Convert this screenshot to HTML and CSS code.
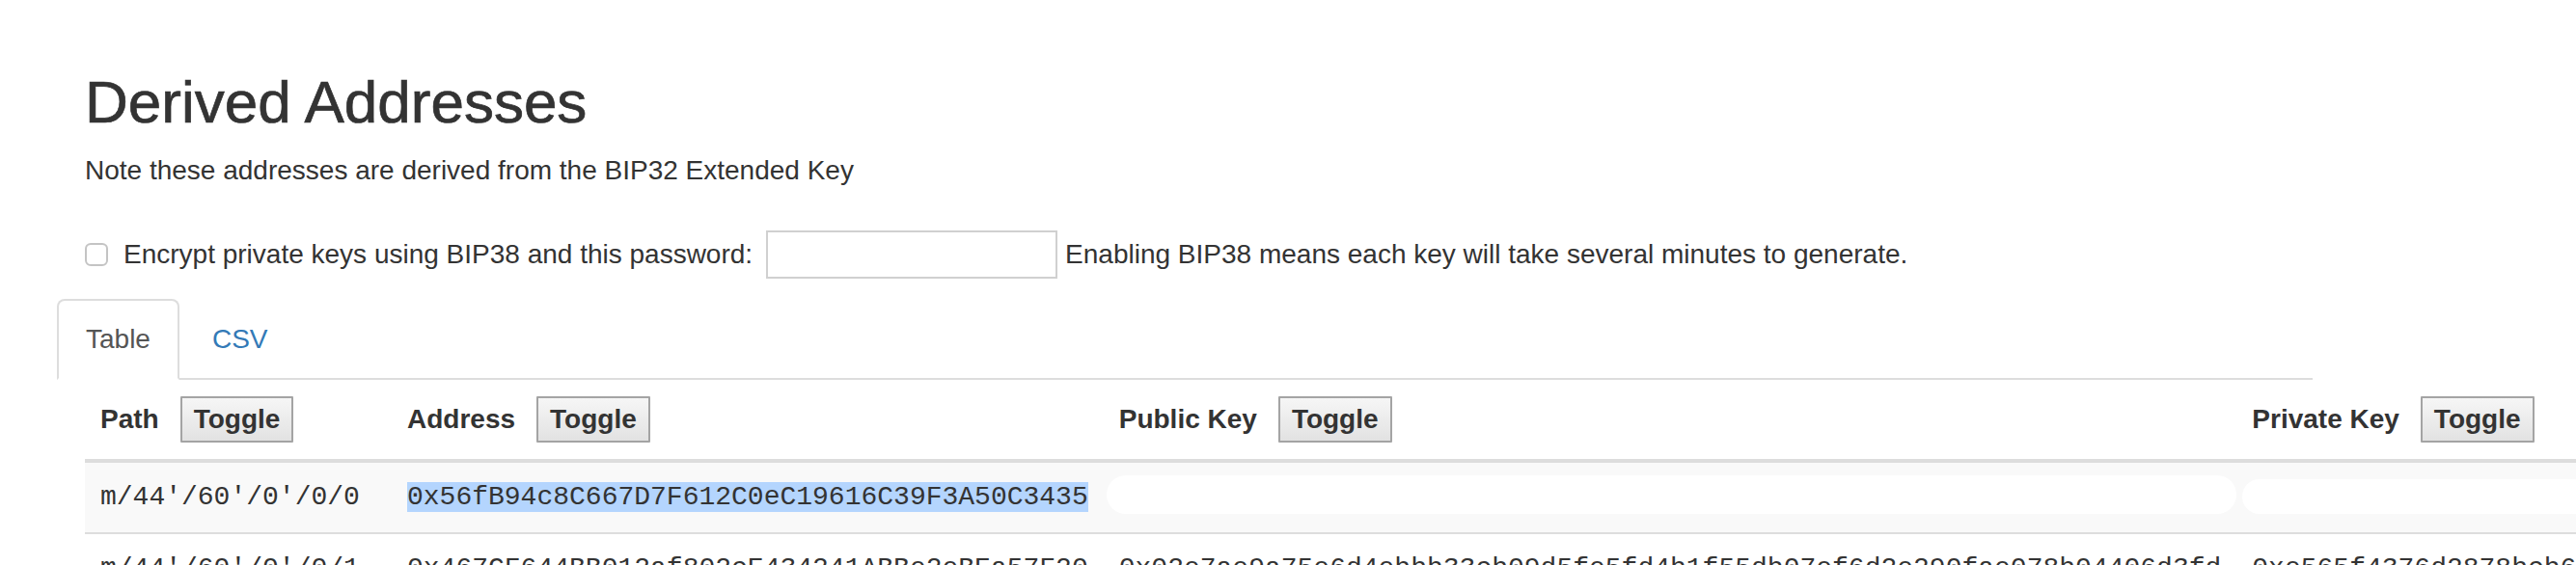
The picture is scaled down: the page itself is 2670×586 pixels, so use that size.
FILE: index.html
```html
<!DOCTYPE html>
<html lang="en">
<head>
<meta charset="utf-8">
<title>Derived Addresses</title>
<link rel="stylesheet" href="styles.css">
</head>
<body>
<main class="page">
  <h2 class="title">Derived Addresses</h2>
  <p class="note">Note these addresses are derived from the BIP32 Extended Key</p>

  <div class="bip38">
    <input type="checkbox" class="check" id="bip38-toggle">
    <label class="bip38-label" for="bip38-toggle">Encrypt private keys using BIP38 and this password:</label>
    <input type="text" class="password">
    <span class="bip38-hint">Enabling BIP38 means each key will take several minutes to generate.</span>
  </div>

  <ul class="tabs">
    <li class="tab active"><a href="#table">Table</a></li>
    <li class="tab"><a href="#csv">CSV</a></li>
  </ul>

  <table class="addresses">
    <thead>
      <tr>
        <th class="col-path"><div class="th-inner"><span>Path</span><button class="toggle">Toggle</button></div></th>
        <th class="col-address"><div class="th-inner"><span>Address</span><button class="toggle">Toggle</button></div></th>
        <th class="col-pub"><div class="th-inner"><span>Public Key</span><button class="toggle">Toggle</button></div></th>
        <th class="col-priv"><div class="th-inner"><span>Private Key</span><button class="toggle">Toggle</button></div></th>
      </tr>
    </thead>
    <tbody>
      <tr class="odd">
        <td>m/44'/60'/0'/0/0</td>
        <td><span class="selected">0x56fB94c8C667D7F612C0eC19616C39F3A50C3435</span></td>
        <td><div class="redact redact-pub"></div></td>
        <td><div class="redact redact-priv"></div></td>
      </tr>
      <tr>
        <td>m/44'/60'/0'/0/1</td>
        <td>0x467CF644BB012af802cE434241ABBe2eBEa57F20</td>
        <td>0x02e7ae9a75e6d4ebbb33cb09d5fe5fd4b1f55db07ef6d2e290fae078b04406d3fd</td>
        <td>0xe565f4376d2878bcb62a91c0d3e7f45ab8290c6e1d7f3a4b2c85e09d6f71a3b4</td>
      </tr>
    </tbody>
  </table>
</main>
</body>
</html>
```

FILE: styles.css
```css
html, body {
  margin: 0;
  padding: 0;
  background: #fff;
  overflow: hidden;
}

body {
  font-family: "Liberation Sans", Arial, Helvetica, sans-serif;
  font-size: 28px;
  line-height: 40px;
  color: #333;
}

.page {
  padding-left: 88px;
}

.title {
  margin: 73px 0 18px;
  font-size: 62px;
  line-height: 66px;
  font-weight: 400;
  color: #333;
  -webkit-text-stroke: 0.7px #333;
}

.note {
  margin: 0;
}

.bip38 {
  display: flex;
  align-items: center;
  margin-top: 42px;
  white-space: nowrap;
}

.check {
  appearance: none;
  -webkit-appearance: none;
  width: 24px;
  height: 24px;
  margin: 0 16px 0 0;
  border: 2px solid #c4c4c4;
  border-radius: 6px;
  background: #fff;
  box-sizing: border-box;
}

.password {
  box-sizing: border-box;
  width: 302px;
  height: 50px;
  margin: 0 8px 0 14px;
  padding: 0 8px;
  border: 2px solid #d0d0d0;
  background: #fff;
  font: inherit;
}

.tabs {
  display: flex;
  list-style: none;
  margin: 21px 0 0 -29px;
  padding: 0;
  width: 2338px;
  border-bottom: 2px solid #ddd;
}

.tab {
  margin-bottom: -2px;
}

.tab a {
  display: block;
  padding: 20px 28px;
  margin-right: 4px;
  border: 2px solid transparent;
  border-radius: 8px 8px 0 0;
  color: #337ab7;
  text-decoration: none;
}

.tab.active a {
  color: #555;
  background: #fff;
  border-color: #ddd;
  border-bottom-color: transparent;
}

.addresses {
  width: max-content;
  border-collapse: collapse;
  border-spacing: 0;
  white-space: nowrap;
}

.addresses th {
  text-align: left;
  font-weight: 700;
  padding: 17px 16px 17px;
  vertical-align: bottom;
  border-bottom: 4px solid #ddd;
}

.th-inner {
  white-space: nowrap;
}

.col-path .th-inner {
  min-width: 286px;
}

.toggle {
  box-sizing: border-box;
  height: 48px;
  margin-left: 22px;
  padding: 0 12px;
  border: 2px solid #a4a4a4;
  border-radius: 1px;
  background: linear-gradient(#f6f6f6, #e2e2e2);
  font-family: inherit;
  font-size: 28px;
  font-weight: 700;
  line-height: 44px;
  color: #333;
}

.addresses td {
  padding: 16px;
  font-family: "Liberation Mono", "Courier New", monospace;
  font-size: 28px;
  line-height: 40px;
  color: #333;
  border-top: 2px solid #ddd;
  vertical-align: top;
}

.addresses tbody tr:first-child td {
  border-top: 0;
}

.addresses tr.odd td {
  background: #f9f9f9;
}

.selected {
  background: #b4d5fe;
}

.redact {
  background: #fff;
  border-radius: 20px;
}

.redact-pub {
  width: 1171px;
  height: 40px;
  margin: -3px -16px 3px -13px;
}

.redact-priv {
  width: 1180px;
  height: 36px;
  margin: 1px -61px 3px -10px;
  border-radius: 18px;
}
```
